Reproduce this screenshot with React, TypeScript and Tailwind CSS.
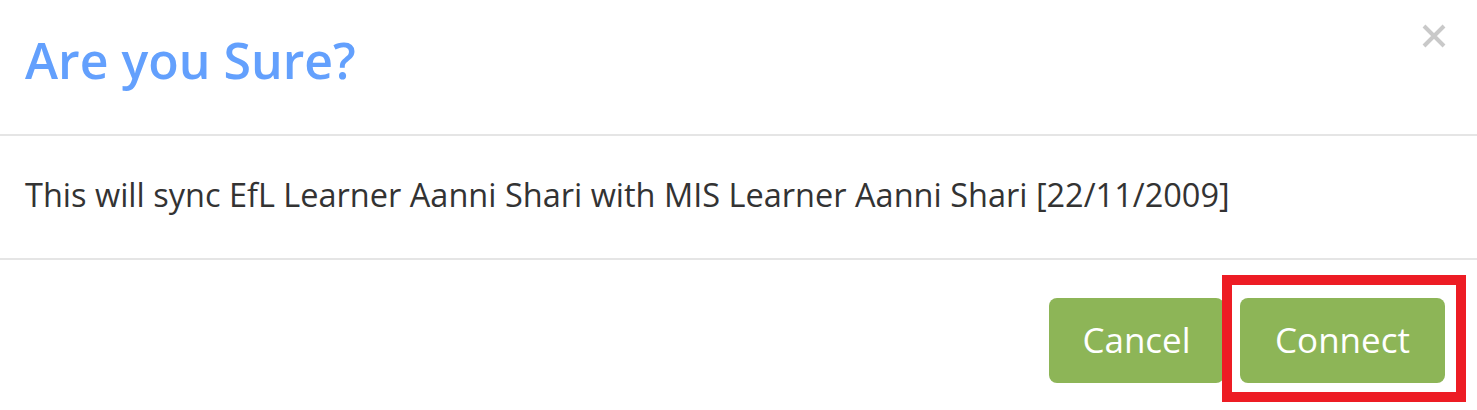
export default function App() {
  return (
    <div className="w-[1477px] h-[410px] bg-white font-['Open_Sans',sans-serif] overflow-hidden">
      <div className="flex justify-between items-start h-[136px] pl-[25px] pr-[31px] border-b-2 border-[#e5e5e5]">
        <h4 className="mt-[35px] text-[50px] leading-none font-semibold text-[#63a0fd]">Are you Sure?</h4>
        <button className="mt-[24px] text-[#c9c9c9]" aria-label="Close">
          <svg width="24" height="24" viewBox="0 0 24 24">
            <path d="M2 2 L22 22 M22 2 L2 22" stroke="currentColor" strokeWidth="4" />
          </svg>
        </button>
      </div>
      <div className="h-[124px] px-[25px] pt-[43px] border-b-2 border-[#e5e5e5]">
        <p className="text-[32.5px] leading-none text-[#333]">
          This will sync EfL Learner Aanni Shari with MIS Learner Aanni Shari [22/11/2009]
        </p>
      </div>
      <div className="flex justify-end gap-[16px] pt-[38px] pr-[32px]">
        <button className="w-[175px] h-[85px] rounded-[8px] bg-[#8db557] text-white text-[35px]">Cancel</button>
        <span className="relative">
          <button className="w-[205px] h-[85px] rounded-[8px] bg-[#8db557] text-white text-[35px]">Connect</button>
          <span className="absolute -left-[18px] -right-[21px] -top-[23px] -bottom-[19px] border-[10px] border-[#ed1c24]" />
        </span>
      </div>
    </div>
  );
}
